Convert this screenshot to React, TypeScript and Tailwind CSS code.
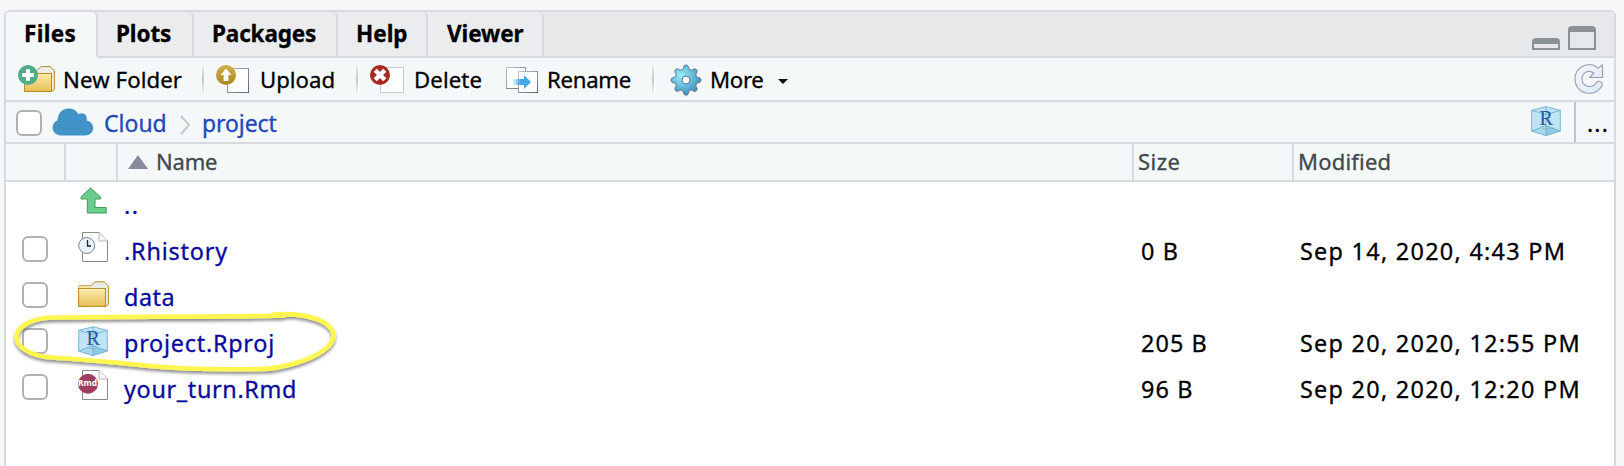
import React from "react";

type P = { className?: string };

const Folder = ({ className = "" }: P) => (
  <svg width="31" height="26" viewBox="0 0 31 26" className={className}>
    <defs>
      <linearGradient id="fold" x1="0" y1="0" x2="0" y2="1">
        <stop offset="0" stopColor="#f8eda9" />
        <stop offset="1" stopColor="#e7be56" />
      </linearGradient>
    </defs>
    <path d="M1 25V4.6H13L17 .8H26L30.4 4.8V23.6L28 25.2Z" fill="#ebebe8" stroke="#b98d22" />
    <path d="M1 7.5V4.8H13L12 7.5Z" fill="#f4e7a5" />
    <rect x=".6" y="7.5" width="26.9" height="17.9" fill="url(#fold)" stroke="#b98d22" />
    <path d="M1.5 8.5h25" stroke="#fdf7d0" />
  </svg>
);

const NewFolderIcon = () => (
  <svg width="37" height="28" viewBox="18 66 37 28" className="ml-3 shrink-0">
    <defs>
      <linearGradient id="nf" x1="0" y1="0" x2="0" y2="1">
        <stop offset="0" stopColor="#f8eda9" />
        <stop offset="1" stopColor="#e7be56" />
      </linearGradient>
    </defs>
    <path d="M24.5 92.2V71.6H37L41 67.6H50L54.4 71.6V90.6L52 92.2Z" fill="#ebebe8" stroke="#b98d22" />
    <rect x="24.5" y="74.5" width="27" height="18" fill="url(#nf)" stroke="#b98d22" />
    <circle cx="28" cy="76" r="10" fill="#51ad87" />
    <path d="M28 70.2v11.6M22.2 76h11.6" stroke="#fff" strokeWidth="4" />
  </svg>
);

const UploadIcon = () => (
  <svg width="34" height="28" viewBox="216 66 34 28" className="shrink-0">
    <defs>
      <linearGradient id="up" x1="0" y1="0" x2="0" y2="1">
        <stop offset="0" stopColor="#d2b14c" />
        <stop offset="1" stopColor="#aa8420" />
      </linearGradient>
      <linearGradient id="pg" x1="0" y1="0" x2="1" y2="1">
        <stop offset="0" stopColor="#b9bcc8" />
        <stop offset="1" stopColor="#5d6378" />
      </linearGradient>
    </defs>
    <rect x="227.5" y="69.5" width="21" height="24" fill="#fff" stroke="url(#pg)" />
    <circle cx="226" cy="76" r="10" fill="url(#up)" />
    <path d="M226 69.6l5.4 6.4h-3v6h-4.800v-6h-3z" fill="#fff" />
  </svg>
);

const DeleteIcon = () => (
  <svg width="35" height="28" viewBox="370 66 35 28" className="shrink-0">
    <rect x="380.500" y="68.500" width="23" height="25" fill="#fff" stroke="#c5ced9" />
    <circle cx="380" cy="76" r="10" fill="#a92b20" />
    <path d="M375.200 71.200l9.600 9.600M384.800 71.200l-9.600 9.600" stroke="#fff" strokeWidth="4.400" />
  </svg>
);

const RenameIcon = () => (
  <svg width="32" height="28" viewBox="506 66 32 28" className="shrink-0">
    <defs>
      <linearGradient id="ra" x1="0" y1="0" x2="1" y2="0">
        <stop offset="0" stopColor="#49a8e8" stopOpacity="0" />
        <stop offset=".45" stopColor="#49a8e8" />
      </linearGradient>
      <linearGradient id="rp" x1="0" y1="0" x2="1" y2="1">
        <stop offset="0" stopColor="#c0c7d5" />
        <stop offset="1" stopColor="#5d6378" />
      </linearGradient>
    </defs>
    <rect x="506.500" y="68.500" width="19" height="21" fill="#fff" stroke="url(#rp)" />
    <rect x="518.500" y="72.500" width="19" height="21" fill="#fff" stroke="url(#rp)" />
    <path d="M512 80h12v-4l7 7-7 7v-4h-12z" fill="url(#ra)" />
  </svg>
);

const gearPoints =
  "M-3.300-10.600C-2.300-11.400-2.900-15-0-15S2.300-11.400 3.300-10.600L5.200-9.800C6.500-9.700 8.400-12.400 10.400-10.400S9.700-6.500 9.800-5.200L10.600-3.300C11.400-2.300 15-2.900 15 0S11.400 2.300 10.600 3.300L9.800 5.200C9.700 6.500 12.400 8.400 10.400 10.400S6.500 9.700 5.200 9.800L3.300 10.600C2.300 11.400 2.900 15 0 15S-2.300 11.400-3.300 10.600L-5.200 9.800C-6.500 9.700-8.400 12.400-10.400 10.400S-9.700 6.500-9.800 5.200L-10.600 3.300C-11.400 2.300-15 2.900-15 0S-11.400-2.300-10.600-3.300L-9.800-5.200C-9.700-6.500-12.400-8.400-10.400-10.400S-6.500-9.700-5.200-9.800Z";

const GearIcon = () => (
  <svg width="32" height="34" viewBox="-16 -16 32 34" className="mt-[3px] shrink-0">
    <defs>
      <radialGradient id="gr" cx=".35" cy=".35" r=".7">
        <stop offset="0" stopColor="#9deaf4" />
        <stop offset=".5" stopColor="#67bfdc" />
        <stop offset="1" stopColor="#3c8cb9" />
      </radialGradient>
    </defs>
    <path d={gearPoints} transform="translate(0 1.300)" fill="#000" opacity=".15" />
    <path d={gearPoints} fill="url(#gr)" stroke="#5c7891" />
    <circle r="4" fill="#f4f8f9" stroke="#5c7891" />
  </svg>
);

const CloudIcon = () => (
  <svg width="42" height="28" viewBox="0 0 42 28" className="ml-[10px] shrink-0">
    <path
      d="M9 27.500C4 27.500.6 23.800.6 19.500c0-3.500 2-6 5-7.200C5.600 5.500 10 .4 16.500.4c4.500 0 8 2 10 5.800C31 3.200 36 7 34.700 12.400c4 1 6.500 3.800 6.500 7.600 0 4.300-3.400 7.500-8 7.500Z"
      fill="#4293c7"
    />
  </svg>
);

const CubeIcon = ({ className = "" }: P) => (
  <svg width="30" height="31" viewBox="0 0 30 31" className={className}>
    <path d="M.7 4.400L15 .7l14.300 3.700v20.700L15 29.600.7 25.100Z" fill="#c0e4f5" />
    <path d="M.7 25.100L15 19.500v10.100Z" fill="#a9d8ed" />
    <path d="M29.300 25.100L15 19.500v10.100Z" fill="#8dcbe5" />
    <path d="M.7 4.400L15 .7l14.300 3.700v20.700L15 29.600.7 25.100ZM.7 4.400L15 8.500l14.300-4.100M.7 25.100L15 19.500l14.300 5.600M15 .7v28.900" fill="none" stroke="#6bb2ca" strokeWidth=".9" />
    <path d="M11 22q4 3 8 0" fill="none" stroke="#8bb6cc" />
    <text x="15.200" y="19.300" textAnchor="middle" fontFamily="Liberation Serif, serif" fontSize="20" fill="#2c5aa5" stroke="#2c5aa5" strokeWidth=".2">R</text>
  </svg>
);

const UpIcon = () => (
  <svg width="28" height="28" viewBox="0 0 28 28" className="mb-[9px] ml-0.5">
    <path d="M10.500 1L20.500 9.800V12H15V20.500H26.200V26H7.300V12H1V9.800Z" fill="#69cd8e" stroke="#459a5e" />
  </svg>
);

const Page = () => (
  <>
    <path d="M4.500.5H21L29.500 9V29.500H4.500Z" fill="#fff" stroke="#7d7d7d" strokeWidth=".9" />
    <path d="M21 .5V9H29.500" fill="#f5f5f5" stroke="#b5b5b5" strokeWidth=".9" />
  </>
);

const HistoryIcon = () => (
  <svg width="31" height="31" viewBox="0 0 31 31" className="mb-[7px]">
    <Page />
    <circle cx="8.700" cy="13.500" r="8" fill="#e9f1fb" stroke="#7d8490" />
    <path d="M9.500 8v6h3.500" fill="none" stroke="#222" strokeWidth="1.300" />
  </svg>
);

const RmdIcon = () => (
  <svg width="31" height="31" viewBox="0 0 31 31" className="mb-[7px]">
    <Page />
    <circle cx="10" cy="13.700" r="10" fill="#9c3f63" />
    <text x="9.600" y="16.300" textAnchor="middle" fontFamily="Open Sans, sans-serif" fontSize="8.400" fontWeight="700" fill="#fff">Rmd</text>
  </svg>
);

const RefreshIcon = () => (
  <svg width="30" height="32" viewBox="0 0 30 32">
    <defs>
      <linearGradient id="rf" x1="0" y1="0" x2="1" y2="1">
        <stop offset="0" stopColor="#f5f8fd" />
        <stop offset="1" stopColor="#dde8f8" />
      </linearGradient>
    </defs>
    <path
      d="M28.500 1.800V14.500H15.700L20 10C13.500 5.900 8 10.500 8 16c0 8.200 10.700 10 14.500 3.200 2.100-2.200 6.500-.2 5.700 3.200C25 28 20.500 30.300 15.500 30.300 7 30.300 1 24 1 15.800 1 5 14-3.500 24.200 5.200Z"
      fill="url(#rf)"
      stroke="#959eb4"
      strokeWidth="1.100"
    />
  </svg>
);

const Check = ({ className = "" }: P) => (
  <span role="checkbox" aria-checked={false} className={`block h-[26px] w-[26px] shrink-0 rounded-[6px] border-2 border-[#b1b1b1] bg-white ${className}`} />
);

const Sep = ({ className = "" }: P) => (
  <span className={`h-8 w-[3px] shrink-0 border-r border-white bg-linear-to-b from-transparent via-[#c3c6c8] to-transparent ${className}`} />
);

const tabs = [
  { label: "Files", cls: "w-[92px] pl-[18px] bg-[#f4f8f9] border-b-[#f4f8f9] tracking-[0.3px]" },
  { label: "Plots", cls: "w-24 pl-[18px] bg-[#ebecee] border-b-[#d6dadc] tracking-[-0.1px]" },
  { label: "Packages", cls: "w-36 pl-[18px] bg-[#ebecee] border-b-[#d6dadc] tracking-[-0.15px]" },
  { label: "Help", cls: "w-[90px] pl-[18px] bg-[#ebecee] border-b-[#d6dadc] tracking-[0px]" },
  { label: "Viewer", cls: "w-[116px] pl-[19px] bg-[#ebecee] border-b-[#d6dadc] tracking-[-0.1px]" },
];

const files = [
  { name: "..", icon: <UpIcon />, check: false, size: "", date: "", cls: "tracking-[1.600px]" },
  { name: ".Rhistory", icon: <HistoryIcon />, check: true, size: "0 B", date: "Sep 14, 2020, 4:43 PM", cls: "tracking-[0.8px]" },
  { name: "data", icon: <Folder className="mb-[6px]" />, check: true, size: "", date: "", cls: "tracking-[0.5px]" },
  { name: "project.Rproj", icon: <CubeIcon className="mb-[3px]" />, check: true, size: "205 B", date: "Sep 20, 2020, 12:55 PM", cls: "tracking-[0.75px]" },
  { name: "your_turn.Rmd", icon: <RmdIcon />, check: true, size: "96 B", date: "Sep 20, 2020, 12:20 PM", cls: "tracking-[0.65px]" },
];

export default function App() {
  return (
    <div className="relative h-[466px] w-[1624px] overflow-hidden bg-[#f5f7f9] pl-1 pt-2.5 font-['Noto_Sans',sans-serif] text-[23px] leading-none text-black [-webkit-text-stroke:0.3px]">
      <div className="flex h-[460px] w-[1612px] flex-col overflow-hidden rounded-t-[6px] border-2 border-[#d6dadc] bg-white">
        <div className="flex h-[46px] shrink-0 bg-[#e6e8ea]">
          {tabs.map((t) => (
            <div key={t.label} className={`flex h-[46px] shrink-0 items-center whitespace-nowrap rounded-tr-[5px] border-b-2 border-r-2 border-r-[#d6dadc] text-[22.500px] font-bold ${t.cls}`}>
              {t.label}
            </div>
          ))}
          <div className="flex flex-1 items-end justify-end gap-2 border-b-2 border-[#d6dadc] pb-1.5 pr-[18px]">
            <span className="h-3 w-7 rounded-t-[4px] border-2 border-t-[6px] border-[#8b9294]" />
            <span className="h-6 w-7 rounded-t-[4px] border-2 border-t-[6px] border-[#8b9294]" />
          </div>
        </div>

        <div className="flex h-11 shrink-0 items-center whitespace-nowrap border-b-2 border-[#d6dadc] bg-[#f4f8f9] text-[22.200px]">
          <div className="flex w-[196px] items-center">
            <NewFolderIcon />
            <span className="ml-[8px] mt-0.5 tracking-[0.1px]">New Folder</span>
          </div>
          <Sep />
          <div className="ml-[11px] flex w-[140px] items-center">
            <UploadIcon />
            <span className="ml-[10px] mt-0.5 tracking-[0px]">Upload</span>
          </div>
          <Sep />
          <div className="ml-[11px] flex w-[136px] items-center">
            <DeleteIcon />
            <span className="ml-[9px] mt-0.5 tracking-[0.1px]">Delete</span>
          </div>
          <div className="flex w-[146px] items-center">
            <RenameIcon />
            <span className="ml-[9px] mt-0.5 tracking-[-0.3px]">Rename</span>
          </div>
          <Sep />
          <div className="ml-[15px] flex flex-1 items-center">
            <GearIcon />
            <span className="ml-[8px] mt-0.5 w-[68px] tracking-[-0.3px]">More</span>
            <span className="mt-1 h-0 w-0 border-x-[5px] border-t-[5px] border-x-transparent border-t-[#111]" />
          </div>
          <div className="mr-[10px]">
            <RefreshIcon />
          </div>
        </div>

        <div className="flex h-[42px] shrink-0 items-center whitespace-nowrap border-b-2 border-[#d6dadc] bg-[#f4f8f9] text-[#2248b8]">
          <Check className="ml-2.5 mt-0.5" />
          <CloudIcon />
          <span className="ml-[10px] mt-0.5 w-[76px] tracking-[0px]">Cloud</span>
          <svg width="10" height="20" viewBox="0 0 10 20" className="mt-1.5">
            <path d="M1 1l8 9-8 9" fill="none" stroke="#c6cacf" strokeWidth="2" />
          </svg>
          <span className="ml-[12px] mt-0.5 flex-1 tracking-[-0.1px]">project</span>
          <CubeIcon className="mb-px mr-[13px]" />
          <span className="flex h-10 w-10 items-center border-l-2 border-[#c0c5cd] pl-[11px] pt-0.5 tracking-[1.200px] text-black">...</span>
        </div>

        <div className="flex h-[38px] shrink-0 whitespace-nowrap border-b-2 border-[#d6dadc] bg-[#f4f8f9] text-[22px] text-[#41484c]">
          <span className="w-[60px] border-r-2 border-[#d6dadc]" />
          <span className="w-[52px] border-r-2 border-[#d6dadc]" />
          <span className="flex w-[1016px] items-center border-r-2 border-[#d6dadc] pl-[10px]">
            <span className="h-0 w-0 border-x-[10px] border-b-[14px] border-x-transparent border-b-[#848b9b]" />
            <span className="mb-0.5 ml-[8px] tracking-[-0.2px]">Name</span>
          </span>
          <span className="flex w-40 items-center border-r-2 border-[#d6dadc] pb-0.5 pl-[4px] tracking-[0.5px]">Size</span>
          <span className="flex flex-1 items-center pb-0.5 pl-[4px] tracking-[0.2px]">Modified</span>
        </div>

        {files.map((f) => (
          <div key={f.name} className="flex h-[46px] shrink-0 items-center whitespace-nowrap text-[23.400px]">
            <span className="w-[72px] pl-4">{f.check && <Check className="mb-[4px]" />}</span>
            <span className="flex w-[46px] items-center">{f.icon}</span>
            <span className={`w-[1016px] pt-0.5 text-[#0a0a9c] ${f.cls}`}>{f.name}</span>
            <span className="w-[160px] pl-px pt-0.5 tracking-[1.100px]">{f.size}</span>
            <span className="pt-0.5 tracking-[1.280px]">{f.date}</span>
          </div>
        ))}
      </div>

      <svg width="350" height="80" viewBox="0 305 350 80" className="pointer-events-none absolute left-0 top-[305px]">
        <defs>
          <filter id="sh" x="-10%" y="-20%" width="120%" height="150%">
            <feDropShadow dx="0" dy="2.500" stdDeviation="1.800" floodColor="#000" floodOpacity=".45" />
          </filter>
        </defs>
        <path
          d="M273 314.500C311 312 333.500 323 333.500 336C333.500 346 318 356 299 362C285 366.500 275 369 260 369C215 370 185 369 150 366C110 362 80 359 52 357.500C30 356 16.500 347 16.500 337C16.500 326 33 317.500 55 317.500C130 316.500 200 317 284 315.500"
          fill="none"
          stroke="#fdf650"
          strokeWidth="4.600"
          strokeLinecap="round"
          filter="url(#sh)"
        />
      </svg>
    </div>
  );
}
